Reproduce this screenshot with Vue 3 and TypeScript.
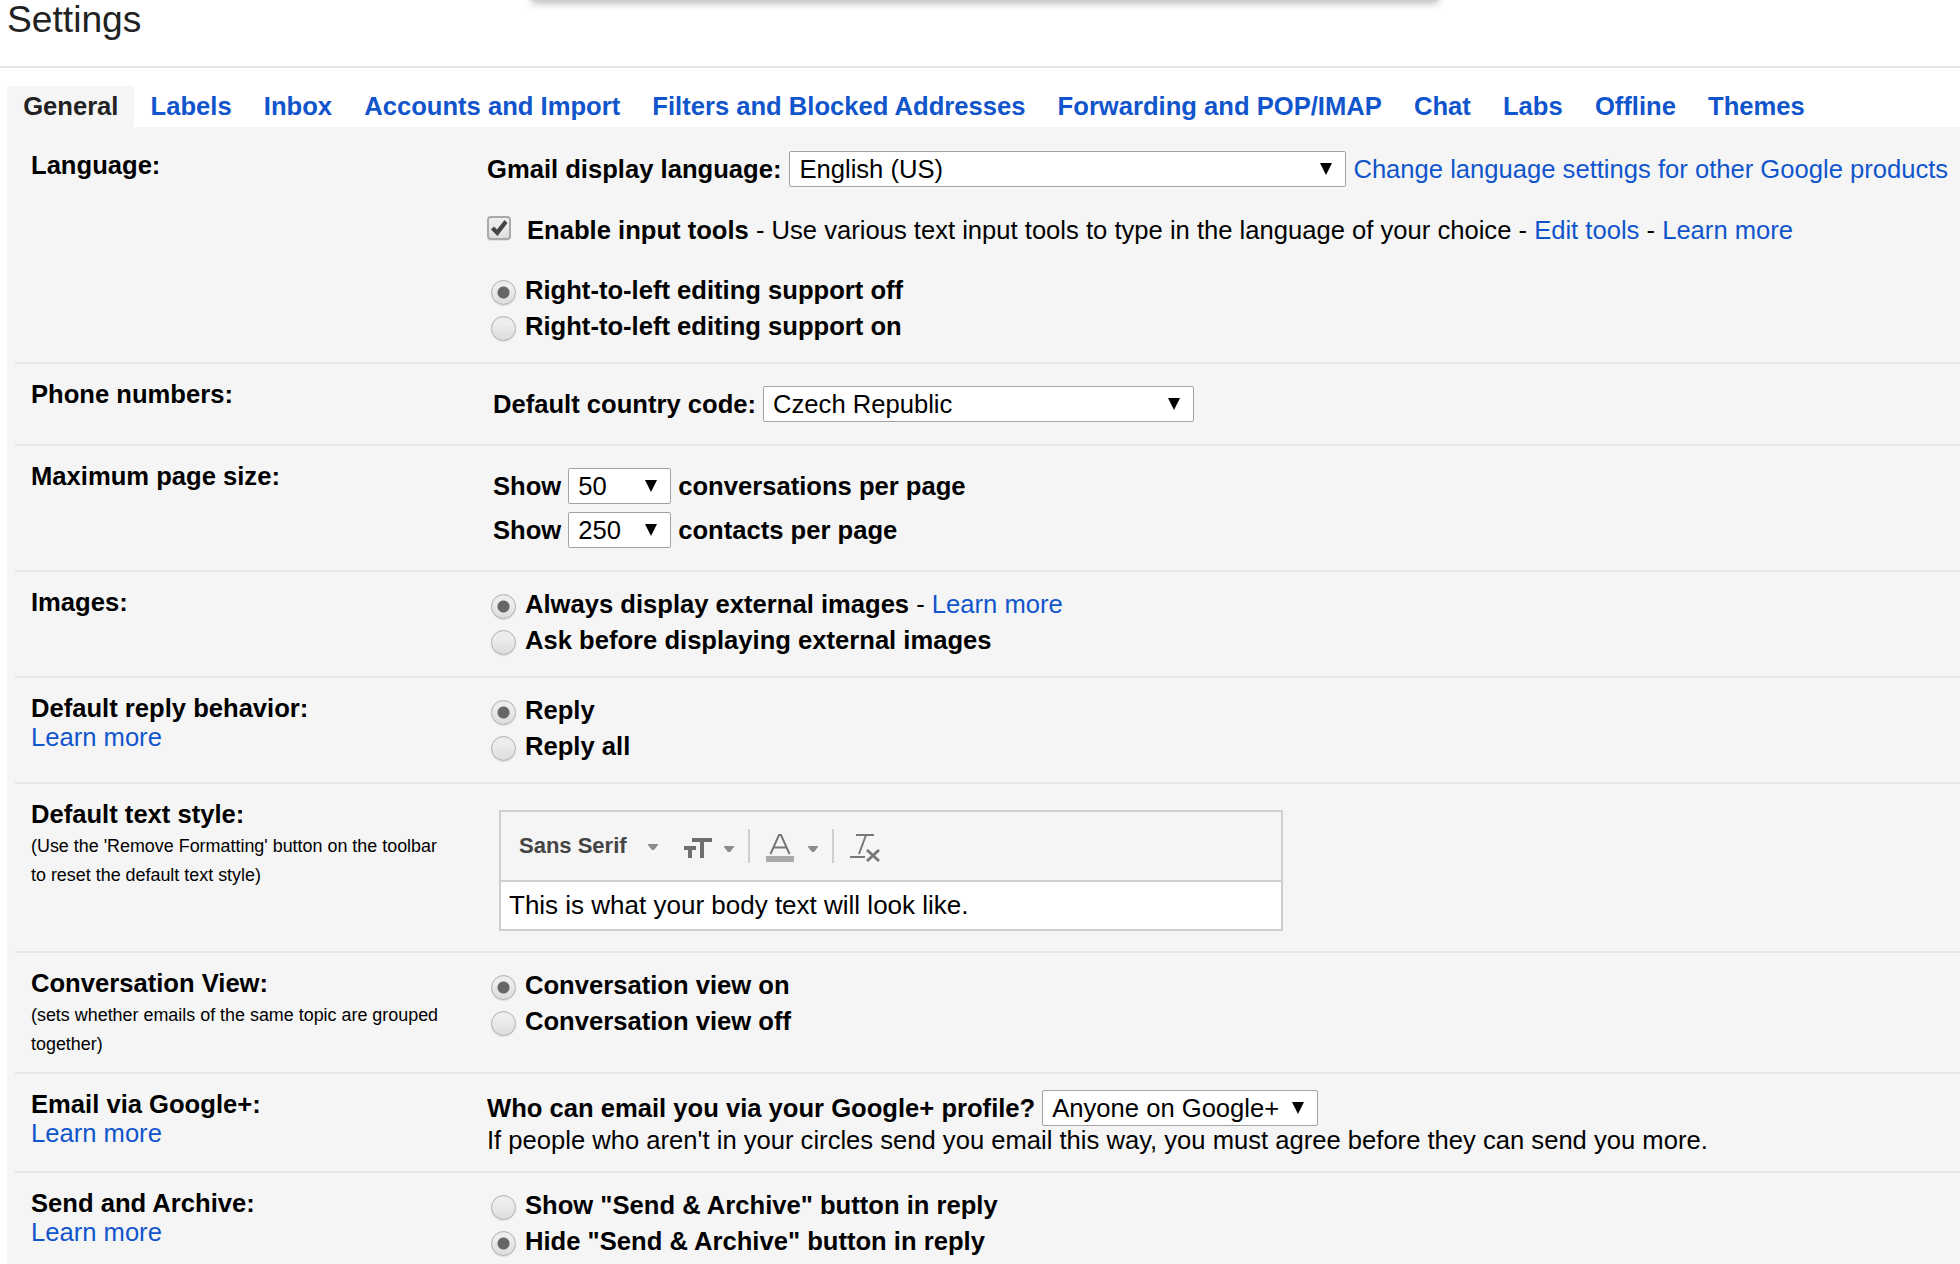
<script setup lang="ts">
interface Choice {
  text: string
  on: boolean
  link?: string
}

interface Section {
  id: string
  title: string
  link?: string
  note?: string[]
  choices?: Choice[]
}

const tabs: string[] = [
  'General',
  'Labels',
  'Inbox',
  'Accounts and Import',
  'Filters and Blocked Addresses',
  'Forwarding and POP/IMAP',
  'Chat',
  'Labs',
  'Offline',
  'Themes',
]

const sections: Section[] = [
  {
    id: 'language',
    title: 'Language:',
    choices: [
      { text: 'Right-to-left editing support off', on: true },
      { text: 'Right-to-left editing support on', on: false },
    ],
  },
  { id: 'phone', title: 'Phone numbers:' },
  { id: 'page-size', title: 'Maximum page size:' },
  {
    id: 'images',
    title: 'Images:',
    choices: [
      { text: 'Always display external images', on: true, link: 'Learn more' },
      { text: 'Ask before displaying external images', on: false },
    ],
  },
  {
    id: 'reply',
    title: 'Default reply behavior:',
    link: 'Learn more',
    choices: [
      { text: 'Reply', on: true },
      { text: 'Reply all', on: false },
    ],
  },
  {
    id: 'text-style',
    title: 'Default text style:',
    note: ["(Use the 'Remove Formatting' button on the toolbar", 'to reset the default text style)'],
  },
  {
    id: 'conversation',
    title: 'Conversation View:',
    note: ['(sets whether emails of the same topic are grouped', 'together)'],
    choices: [
      { text: 'Conversation view on', on: true },
      { text: 'Conversation view off', on: false },
    ],
  },
  { id: 'google-plus', title: 'Email via Google+:', link: 'Learn more' },
  {
    id: 'archive',
    title: 'Send and Archive:',
    link: 'Learn more',
    choices: [
      { text: 'Show "Send & Archive" button in reply', on: false },
      { text: 'Hide "Send & Archive" button in reply', on: true },
    ],
  },
]

const pageSizes = [
  { value: '50', unit: 'conversations per page' },
  { value: '250', unit: 'contacts per page' },
]
</script>

<template>
  <div class="page">
    <div class="dropdown-shadow"></div>
    <header class="header"><h1>Settings</h1></header>

    <nav class="tabs">
      <a v-for="(tab, i) in tabs" :key="tab" class="tab" :class="{ active: i === 0 }">{{ tab }}</a>
    </nav>

    <main class="panel">
      <section v-for="s in sections" :key="s.id" class="row" :class="s.id">
        <div class="label">
          <b>{{ s.title }}</b>
          <a v-if="s.link">{{ s.link }}</a>
          <div v-if="s.note" class="note">
            <small v-for="line in s.note" :key="line">{{ line }}</small>
          </div>
        </div>

        <div class="content">
          <template v-if="s.id === 'language'">
            <div class="line">
              <b>Gmail display language:</b>
              <span class="select wide">English (US)<i class="caret"></i></span>
              <a>Change language settings for other Google products</a>
            </div>
            <div class="line tools">
              <svg class="checkbox" width="24" height="26" viewBox="0 0 24 26">
                <defs>
                  <linearGradient id="box" x1="0" y1="0" x2="0" y2="1">
                    <stop offset="0.3" stop-color="#ededed" />
                    <stop offset="1" stop-color="#dcdcdc" />
                  </linearGradient>
                </defs>
                <rect x="0.5" y="1.5" width="23" height="23.5" rx="3" fill="#e2e2e2" />
                <rect x="1" y="1" width="22" height="22" rx="3" fill="url(#box)" stroke="#a9a9a9" stroke-width="2" />
                <path d="M4 13.5 L7 10.5 L10 13.5 L17.5 4 L20.5 7 L10.5 20 Z" fill="#444" />
              </svg>
              <span><b>Enable input tools</b> - Use various text input tools to type in the language of your choice - <a>Edit tools</a> - <a>Learn more</a></span>
            </div>
          </template>

          <div v-else-if="s.id === 'phone'" class="line">
            <b>Default country code:</b>
            <span class="select country">Czech Republic<i class="caret"></i></span>
          </div>

          <template v-else-if="s.id === 'page-size'">
            <div v-for="p in pageSizes" :key="p.value" class="line">
              <b>Show</b>
              <span class="select count">{{ p.value }}<i class="caret"></i></span>
              <b>{{ p.unit }}</b>
            </div>
          </template>

          <div v-else-if="s.id === 'text-style'" class="editor">
            <div class="toolbar">
              <span class="font-name">Sans Serif</span>
              <svg width="240" height="50" viewBox="0 0 240 50">
                <g fill="#8c8c8c">
                  <path d="M8 19h10v1l-4 5h-2l-4-5z" />
                  <path d="M84 21h10v1l-4 5h-2l-4-5z" />
                  <path d="M168 21h10v1l-4 5h-2l-4-5z" />
                </g>
                <path d="M52 13h20v4h-8v16h-4V17h-8z M44 21h12v4h-4v8h-4v-8h-4z" fill="#6f6f6f" />
                <path d="M108 4h2v34h-2z M192 4h2v34h-2z" fill="#cfcfcf" />
                <path d="M130.5 29 L139 10 H141 L149.5 29 M133.5 22.5 H146.5" fill="none" stroke="#777" stroke-width="2" />
                <path d="M126 31h28v6h-28z" fill="#aaa" />
                <path d="M216 10h18 M226 10 L219 29 M210 32h15" fill="none" stroke="#777" stroke-width="2" />
                <path d="M227 25 L239 36 M239 25 L227 36" fill="none" stroke="#777" stroke-width="2.8" />
              </svg>
            </div>
            <div class="sample">This is what your body text will look like.</div>
          </div>

          <template v-else-if="s.id === 'google-plus'">
            <div class="line">
              <b>Who can email you via your Google+ profile?</b>
              <span class="select audience">Anyone on Google+<i class="caret"></i></span>
            </div>
            <div>If people who aren't in your circles send you email this way, you must agree before they can send you more.</div>
          </template>

          <div v-if="s.choices" class="choices">
            <div v-for="c in s.choices" :key="c.text" class="line">
              <i class="radio" :class="{ on: c.on }"></i>
              <span><b>{{ c.text }}</b><template v-if="c.link"> - <a>{{ c.link }}</a></template></span>
            </div>
          </div>
        </div>
      </section>
    </main>
  </div>
</template>

<style>
body {
  margin: 0;
  background: #fff;
}
</style>

<style scoped>
.page {
  position: relative;
  display: flex;
  flex-direction: column;
  width: 1960px;
  height: 1264px;
  overflow: hidden;
  font: 25.6px/29px "Liberation Sans", Arial, sans-serif;
  color: #000;
  white-space: nowrap;
}
.dropdown-shadow {
  position: absolute;
  left: 532px;
  top: -20px;
  width: 906px;
  height: 21px;
  box-shadow: 0 2px 8px rgba(0, 0, 0, 0.3);
  background: #d0d0d0;
}
a {
  color: #15c;
}
.header {
  flex: none;
  box-sizing: border-box;
  height: 68px;
  padding-left: 7px;
  border-bottom: 2px solid #e5e5e5;
}
h1 {
  margin: 0;
  font-size: 37.2px;
  font-weight: 400;
  line-height: 39px;
  color: #222;
}
.tabs {
  display: flex;
  flex: none;
  height: 41px;
  padding: 18px 0 0 7px;
}
.tab {
  padding: 0 16px 0 16.15px;
  font-weight: 700;
  line-height: 41px;
}
.tab.active {
  background: #f5f5f5;
  color: #222;
}
.panel {
  flex: 1;
  margin-left: 7px;
  padding: 8px 0 0 8px;
  background: #f5f5f5;
}
.row {
  display: flex;
  box-sizing: border-box;
  padding-left: 16px;
  border-bottom: 2px solid #e5e5e5;
}
.label {
  display: flex;
  flex: none;
  flex-direction: column;
  width: 456px;
  padding-top: 16px;
}
.note {
  display: flex;
  flex-direction: column;
  padding-top: 3px;
}
small {
  font-size: 17.92px;
}
.content {
  padding-top: 16px;
}
.line {
  display: flex;
  align-items: center;
  height: 36px;
}
.language { height: 229px; }
.phone { height: 82px; }
.page-size { height: 126px; }
.images,
.reply { height: 106px; }
.text-style { height: 169px; }
.conversation { height: 121px; }
.google-plus { height: 99px; }
.archive { height: 106px; }

.phone .content,
.page-size .content {
  padding: 22px 0 0 6px;
}
.page-size .line + .line {
  margin-top: 8px;
}
.text-style .content {
  padding: 26px 0 0 12px;
}
.images .content,
.reply .content,
.conversation .content,
.archive .content {
  padding-top: 14px;
}
.tools {
  margin: 25px 0 24px;
}
.checkbox {
  margin: -3px 16px 0 0;
}
.select {
  position: relative;
  box-sizing: border-box;
  height: 36px;
  margin: 0 7px;
  padding-left: 9px;
  border: 1px solid #a3a3a3;
  border-radius: 2px;
  background: #fff;
  line-height: 34px;
}
.select.wide {
  width: 557px;
  margin-left: 8px;
}
.country { width: 431px; }
.count { width: 103px; }
.audience { width: 276px; }
.caret {
  position: absolute;
  right: 13px;
  top: 11px;
  border: solid transparent;
  border-width: 12px 6px 0;
  border-top-color: #000;
}
.radio {
  box-sizing: border-box;
  width: 25px;
  height: 25px;
  margin: 5px 9px 0 4px;
  border: 1px solid #b0b0b0;
  border-radius: 50%;
  background: linear-gradient(#ededed 30%, #dcdcdc);
  box-shadow: 0 1px 1px rgba(0, 0, 0, 0.1);
}
.radio.on {
  background: radial-gradient(circle, #666 5.5px, transparent 6.5px), linear-gradient(#ededed 30%, #dcdcdc);
}
.editor {
  box-sizing: border-box;
  width: 784px;
  height: 121px;
  border: 2px solid #cecece;
}
.toolbar {
  display: flex;
  height: 68px;
  border-bottom: 2px solid #cecece;
}
.toolbar svg {
  flex: none;
  margin-top: 13px;
}
.font-name {
  width: 121px;
  padding-left: 18px;
  color: #444;
  font-size: 22px;
  font-weight: 700;
  line-height: 68px;
}
.sample {
  height: 47px;
  padding-left: 8px;
  background: #fff;
  font-size: 26px;
  line-height: 46px;
}
</style>
